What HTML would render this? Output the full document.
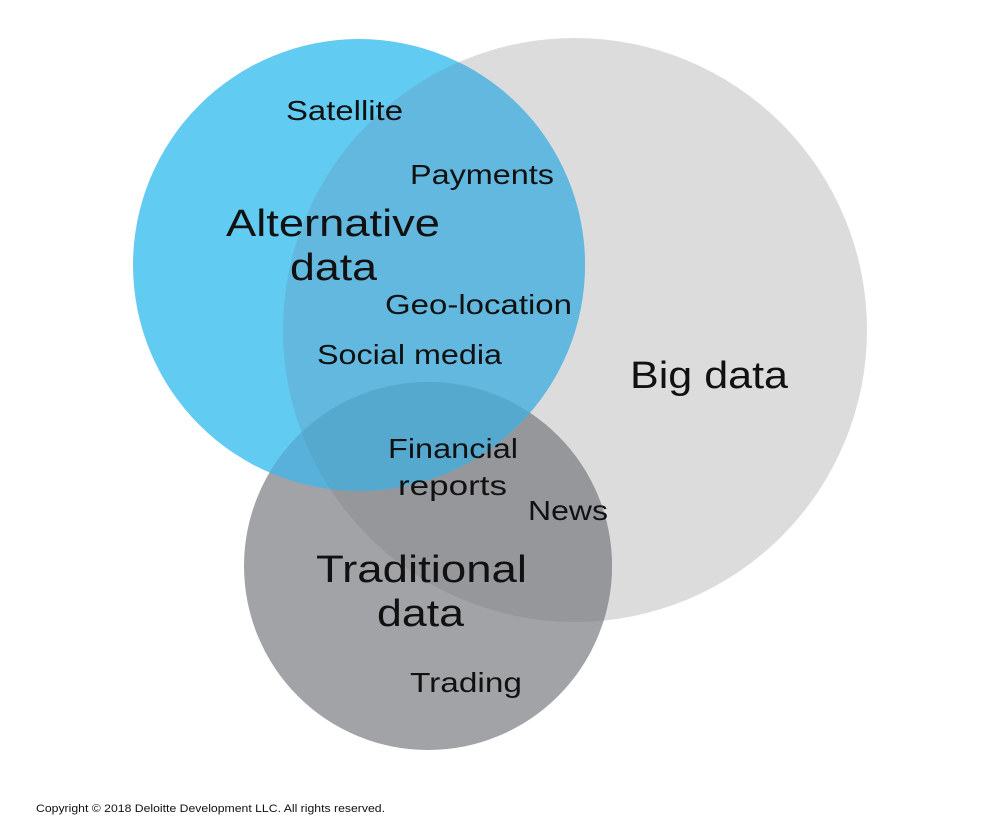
<!DOCTYPE html>
<html><head><style>
html,body{margin:0;padding:0;background:#fff;width:1000px;height:840px;overflow:hidden}
svg{display:block}
text{font-family:"Liberation Sans",sans-serif;fill:#111}
</style></head><body>
<svg width="1000" height="840" viewBox="0 0 1000 840">
<defs>
<clipPath id="cBig"><circle cx="575" cy="330" r="292"/></clipPath>
<clipPath id="cBlue"><circle cx="359" cy="265" r="226"/></clipPath>
</defs>
<circle cx="575" cy="330" r="292" fill="#dcdcdc"/>
<circle cx="359" cy="265" r="226" fill="#62cbf1"/>
<circle cx="359" cy="265" r="226" fill="#62b8de" clip-path="url(#cBig)"/>
<circle cx="428" cy="566" r="184" fill="#a2a3a7"/>
<circle cx="428" cy="566" r="184" fill="#96979b" clip-path="url(#cBig)"/>
<circle cx="428" cy="566" r="184" fill="#57b1da" clip-path="url(#cBlue)"/>
<g clip-path="url(#cBig)"><circle cx="428" cy="566" r="184" fill="#55a9ce" clip-path="url(#cBlue)"/></g>
<text x="286" y="120" font-size="28" textLength="117" lengthAdjust="spacingAndGlyphs">Satellite</text>
<text x="410" y="184" font-size="28" textLength="144" lengthAdjust="spacingAndGlyphs">Payments</text>
<text x="226" y="236" font-size="38" textLength="214" lengthAdjust="spacingAndGlyphs">Alternative</text>
<text x="290" y="280" font-size="38" textLength="87" lengthAdjust="spacingAndGlyphs">data</text>
<text x="385" y="314" font-size="28" textLength="187" lengthAdjust="spacingAndGlyphs">Geo-location</text>
<text x="317" y="364" font-size="28" textLength="185" lengthAdjust="spacingAndGlyphs">Social media</text>
<text x="630" y="388" font-size="38" textLength="158" lengthAdjust="spacingAndGlyphs">Big data</text>
<text x="388" y="458" font-size="28" textLength="130" lengthAdjust="spacingAndGlyphs">Financial</text>
<text x="398" y="495" font-size="28" textLength="109" lengthAdjust="spacingAndGlyphs">reports</text>
<text x="528" y="520" font-size="28" textLength="80" lengthAdjust="spacingAndGlyphs">News</text>
<text x="316" y="582" font-size="38" textLength="211" lengthAdjust="spacingAndGlyphs">Traditional</text>
<text x="377" y="626" font-size="38" textLength="87" lengthAdjust="spacingAndGlyphs">data</text>
<text x="410" y="692" font-size="28" textLength="112" lengthAdjust="spacingAndGlyphs">Trading</text>
<text x="36" y="812" font-size="11" textLength="349" lengthAdjust="spacingAndGlyphs">Copyright © 2018 Deloitte Development LLC. All rights reserved.</text>
</svg>
</body></html>
